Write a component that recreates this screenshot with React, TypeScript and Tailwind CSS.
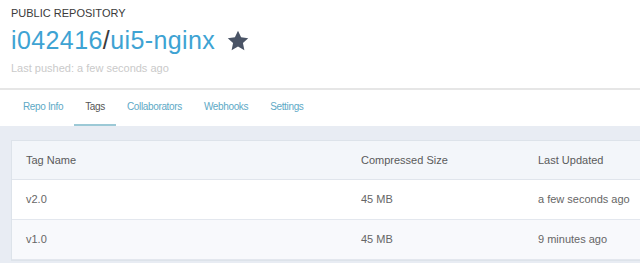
import React from "react";

const tabs = ["Repo Info", "Tags", "Collaborators", "Webhooks", "Settings"];

const rows = [
  { tag: "v2.0", size: "45 MB", updated: "a few seconds ago" },
  { tag: "v1.0", size: "45 MB", updated: "9 minutes ago" },
];

export default function App() {
  return (
    <div
      className="w-[640px] h-[263px] overflow-hidden bg-white flex flex-col"
      style={{ fontFamily: '"Liberation Sans", Arial, sans-serif' }}
    >
      <div className="pl-[11px] pt-[6px]">
        <div className="text-[11px] leading-[14px] text-[#3a3a3a]">PUBLIC REPOSITORY</div>
        <div className="mt-[5px] flex items-center h-[30px]">
          <span className="text-[25px] leading-[30px] tracking-[0.4px] text-[#3ea3d3]">
            i042416<span className="text-[#3b3b3b]">/</span>ui5-nginx
          </span>
          <svg className="ml-[12px] mt-[1px]" width="22" height="21" viewBox="0 0 24 23">
            <path
              d="M12 0.8l3.4 7.2 7.8 0.9-5.8 5.4 1.6 7.8L12 18.2 5 22.1l1.6-7.8L0.8 8.9l7.8-0.9z"
              fill="#4a5466"
            />
          </svg>
        </div>
        <div className="mt-[6px] text-[11px] leading-[14px] text-[#cacaca]">
          Last pushed: a few seconds ago
        </div>
      </div>
      <div className="mt-[13px] h-[2px] bg-[#e6e6e6]" />
      <div className="h-[36px] flex pl-[12px] pt-[11px]">
        {tabs.map((t) => (
          <div
            key={t}
            className={
              "px-[11px] h-[25px] text-[10px] leading-[12px] tracking-[-0.35px] " +
              (t === "Tags"
                ? "text-[#555] border-b-2 border-[#9cc9d6]"
                : "text-[#5ea9c6]")
            }
          >
            {t}
          </div>
        ))}
      </div>
      <div className="flex-1 bg-[#e8ecf3] pl-[11px] pt-[14px]">
        <div className="bg-white border border-[#dde3ea] border-r-0 text-[11px] text-[#666]">
          <div className="h-[39px] flex items-center bg-[#f3f6fa] border-b border-[#e0e5ec] text-[#5a5a5a]">
            <div className="w-[334px] pl-[14px]">Tag Name</div>
            <div className="w-[177px] pl-[15px]">Compressed Size</div>
            <div className="pl-[15px]">Last Updated</div>
          </div>
          {rows.map((r, i) => (
            <div
              key={r.tag}
              className={
                "h-[40px] flex items-center border-b border-[#e3e7ee] " +
                (i === 1 ? "bg-[#f8f9fc]" : "bg-white")
              }
            >
              <div className="w-[334px] pl-[14px]">{r.tag}</div>
              <div className="w-[177px] pl-[15px]">{r.size}</div>
              <div className="pl-[15px]">{r.updated}</div>
            </div>
          ))}
        </div>
      </div>
    </div>
  );
}
